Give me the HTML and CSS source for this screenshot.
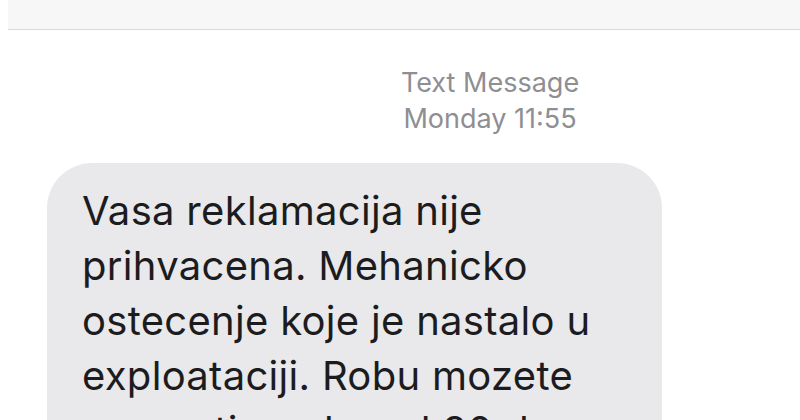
FILE: index.html
```html
<!DOCTYPE html>
<html>
  <head>
    <meta name="viewport" content="width=device-width, initial-scale=1.0" />
    <link rel="stylesheet" href="styles.css">
  </head>

  <body>
    <div class="screen">
      <div class="nav-bar"></div>

      <div class="stamp">
        <div>Text Message</div>
        <div>Monday 11:55</div>
      </div>

      <div class="bubble">
        Vasa reklamacija nije prihvacena. Mehanicko ostecenje koje je nastalo
        u exploataciji. Robu mozete preuzeti u roku od 30 dana
      </div>
    </div>
  </body>
</html>
```

FILE: styles.css
```css
body {
  margin: 0;
  background-color: white;
  overflow: hidden;
  font-family: Inter, "Liberation Sans", Arial, sans-serif;
}

/*the phone screen is wider than the window, it is cropped on the right:*/
.screen {
  width: 964px;
  margin-left: 8px;
}

.nav-bar {
  height: 29px;
  background-color: #f7f7f7;
  border-bottom: 1px solid #d9d9d9;
}

.stamp {
  margin-top: 35px;
  text-align: center;
  color: #8e8e93;
  font-size: 27px;
  line-height: 36px;
}

.bubble {
  margin-top: 26px;
  margin-left: 39px;
  width: 545px;
  padding: 20px 35px 30px 35px;
  background-color: #e9e9eb;
  border-radius: 45px;
  color: #1c1c1e;
  font-size: 40px;
  line-height: 55px;
  letter-spacing: 0.3px;
}
```
